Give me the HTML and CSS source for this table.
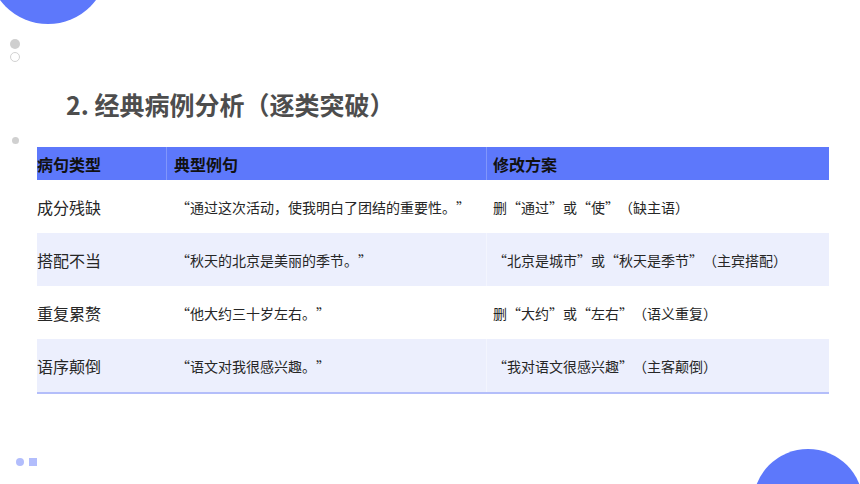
FILE: index.html
```html
<!DOCTYPE html>
<html lang="zh-CN">
<head>
<meta charset="utf-8">
<title>经典病例分析</title>
<link rel="stylesheet" href="styles.css">
</head>
<body>
<div class="slide">
  <div class="deco deco-top"></div>
  <div class="deco dot-fill"></div>
  <div class="deco dot-ring"></div>
  <div class="deco dot-small"></div>
  <div class="deco bl-circle"></div>
  <div class="deco bl-square"></div>
  <div class="deco deco-br"></div>

  <h1 class="title">2. 经典病例分析（逐类突破）</h1>

  <div class="table">
    <div class="row head">
      <div class="cell c1">病句类型</div>
      <div class="cell c2">典型例句</div>
      <div class="cell c3">修改方案</div>
    </div>
    <div class="row">
      <div class="cell c1">成分残缺</div>
      <div class="cell c2">“通过这次活动，使我明白了团结的重要性。”</div>
      <div class="cell c3">删“通过”或“使”（缺主语）</div>
    </div>
    <div class="row alt">
      <div class="cell c1">搭配不当</div>
      <div class="cell c2">“秋天的北京是美丽的季节。”</div>
      <div class="cell c3">“北京是城市”或“秋天是季节”（主宾搭配）</div>
    </div>
    <div class="row">
      <div class="cell c1">重复累赘</div>
      <div class="cell c2">“他大约三十岁左右。”</div>
      <div class="cell c3">删“大约”或“左右”（语义重复）</div>
    </div>
    <div class="row alt last">
      <div class="cell c1">语序颠倒</div>
      <div class="cell c2">“语文对我很感兴趣。”</div>
      <div class="cell c3">“我对语文很感兴趣”（主客颠倒）</div>
    </div>
  </div>
</div>
</body>
</html>
```

FILE: styles.css
```css
html, body {
  margin: 0;
  padding: 0;
  background: #ffffff;
}

.slide {
  position: relative;
  width: 860px;
  height: 484px;
  overflow: hidden;
  background: #ffffff;
  font-family: "Noto Sans CJK SC", "Noto Sans", sans-serif;
  color: #262626;
  text-spacing-trim: space-all;
}

.deco {
  position: absolute;
}

.deco-top {
  left: -12px;
  top: -96px;
  width: 120px;
  height: 120px;
  border-radius: 50%;
  background: #5d78fb;
}

.deco-br {
  left: 753px;
  top: 449px;
  width: 110px;
  height: 110px;
  border-radius: 50%;
  background: #5d78fb;
}

.dot-fill {
  left: 10px;
  top: 39px;
  width: 10px;
  height: 10px;
  border-radius: 50%;
  background: #cfcfcf;
}

.dot-ring {
  left: 10px;
  top: 52px;
  width: 8px;
  height: 8px;
  border-radius: 50%;
  border: 1px solid #d2d2d2;
}

.dot-small {
  left: 12px;
  top: 137px;
  width: 7px;
  height: 7px;
  border-radius: 50%;
  background: #d0d0d0;
}

.bl-circle {
  left: 16px;
  top: 458px;
  width: 8px;
  height: 8px;
  border-radius: 50%;
  background: #b2bdfc;
}

.bl-square {
  left: 29px;
  top: 458px;
  width: 8px;
  height: 8px;
  background: #b2bdfc;
}

.title {
  margin: 0;
  padding: 86px 0 0 66px;
  height: 36px;
  line-height: 36px;
  font-size: 25px;
  font-weight: 700;
  color: #4d4d4d;
}

.table {
  margin: 25px 0 0 37px;
  width: 792px;
}

.row {
  display: grid;
  grid-template-columns: 129px 320px 343px;
  height: 53px;
  align-items: center;
  font-size: 14px;
}

.row.head {
  height: 33px;
  background: #5d78fb;
  font-weight: 700;
  font-size: 16px;
  color: #111111;
}

.row.alt {
  background: #eceffd;
}

.row.last {
  border-bottom: 2px solid #b4befa;
}

.cell {
  height: 100%;
  display: flex;
  align-items: center;
  white-space: nowrap;
  box-sizing: border-box;
}

.cell.c1 {
  font-size: 16px;
  padding-left: 0;
}

.cell.c2 {
  padding-left: 10px;
}

.cell.c3 {
  padding-left: 7px;
}

.row.head .cell.c2,
.row.head .cell.c3 {
  border-left: 1px solid #8196fb;
  padding-left: 7px;
  font-size: 16px;
}

.row.head .cell.c3 {
  padding-left: 6px;
}

.row.alt .cell.c3 {
  border-left: 1px solid #f3f5fe;
  padding-left: 6px;
}
```
